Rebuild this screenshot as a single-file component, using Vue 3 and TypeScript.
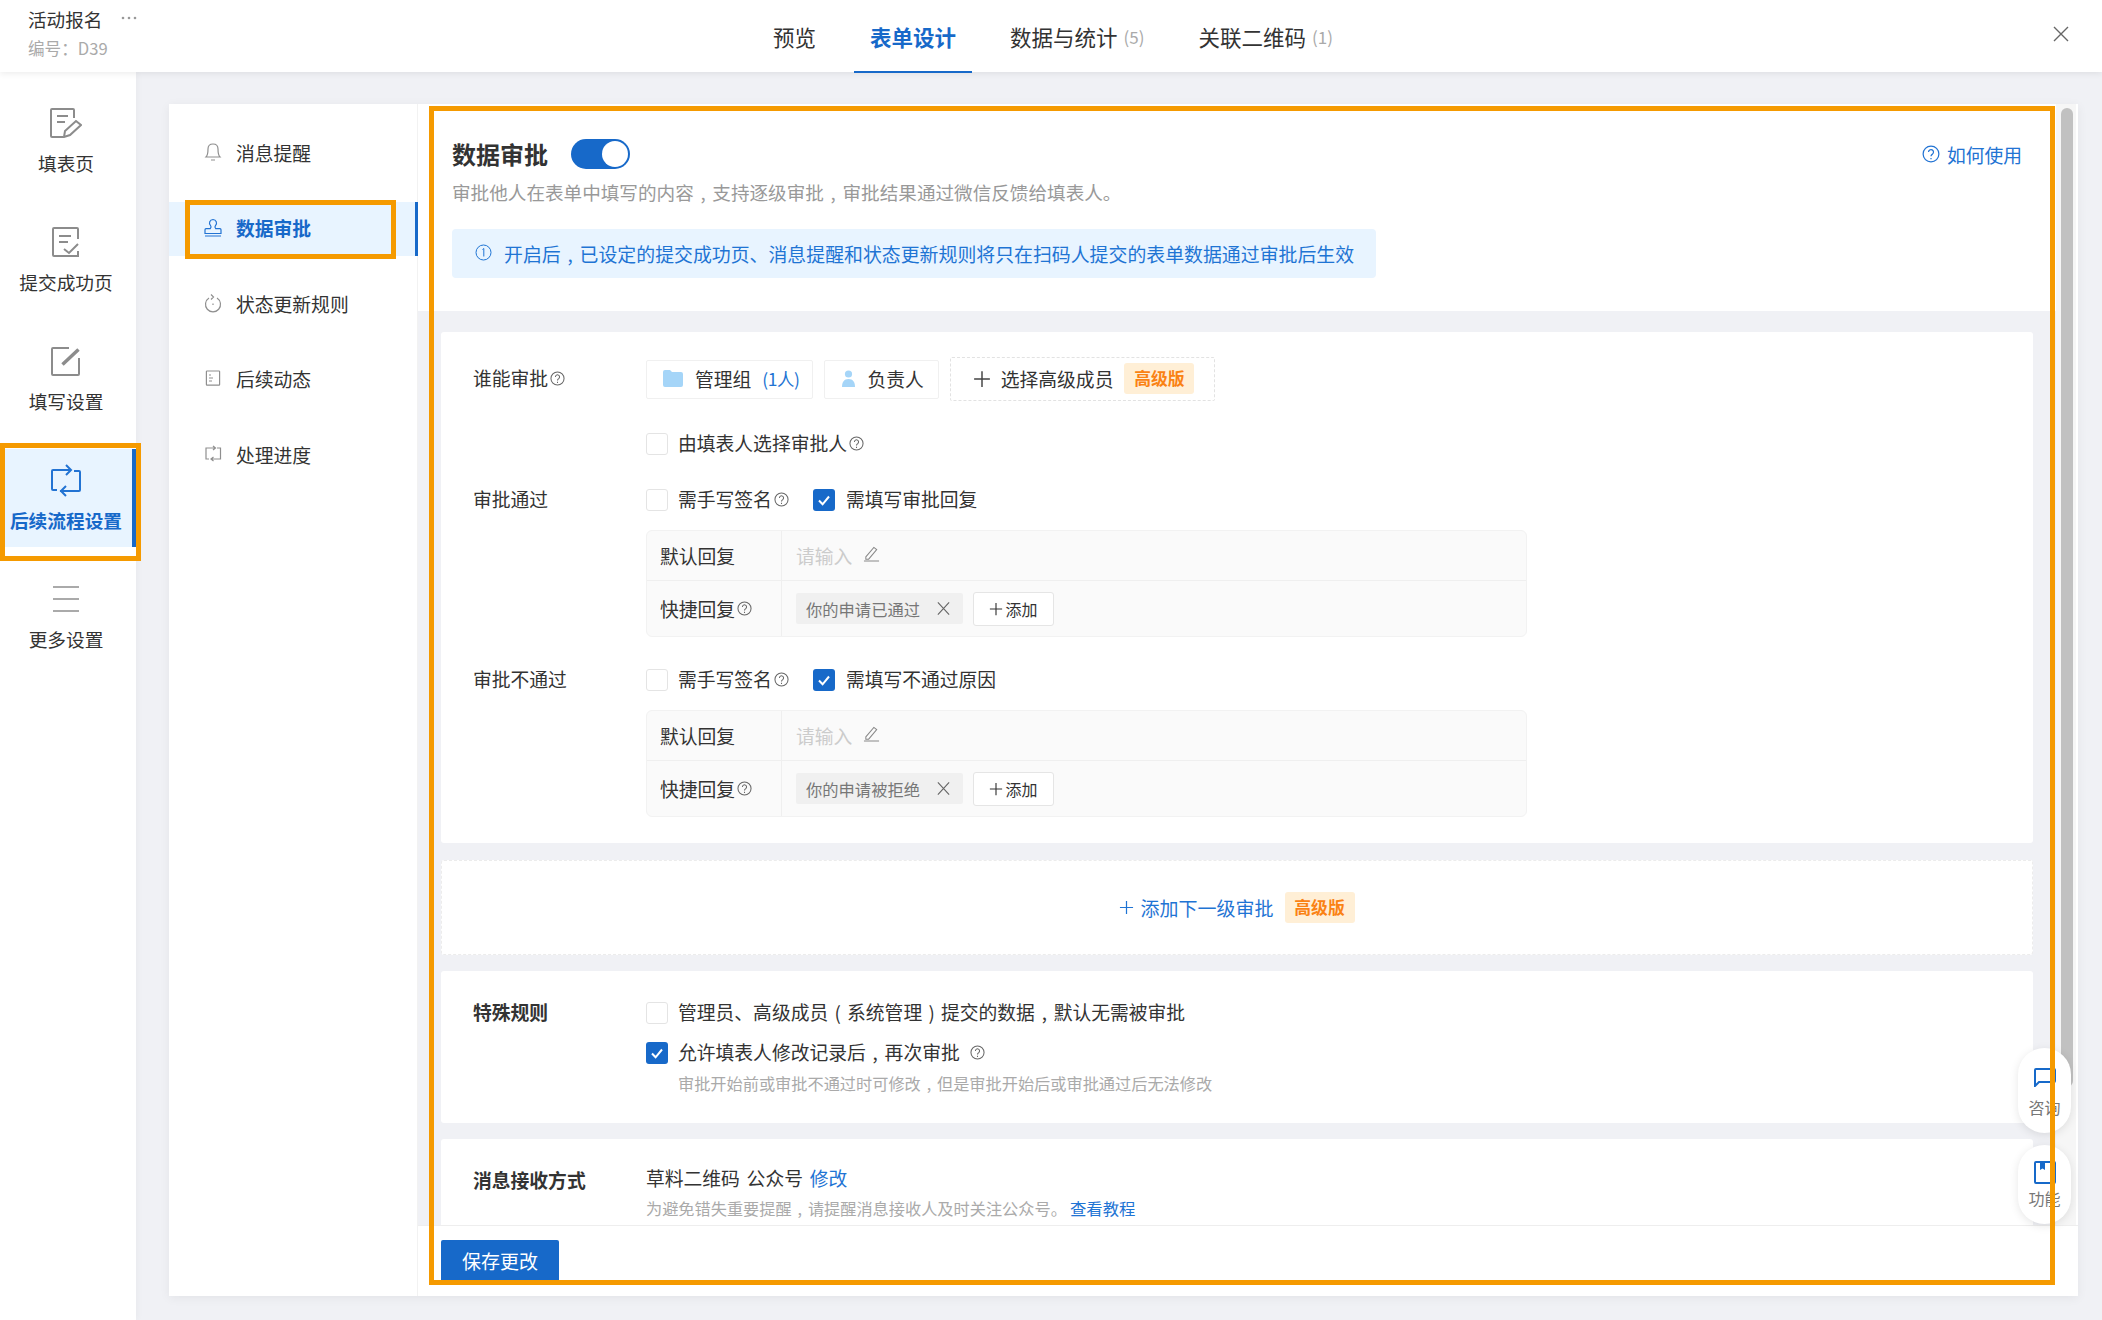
<script setup lang="ts">
const tabs = [
  { label: '预览', count: '', active: false },
  { label: '表单设计', count: '', active: true },
  { label: '数据与统计', count: '(5)', active: false },
  { label: '关联二维码', count: '(1)', active: false },
]
const rail = [
  { label: '填表页', active: false, w: 32, h: 30, d: 'M24 10V2a1 1 0 0 0-1-1H2a1 1 0 0 0-1 1v26a1 1 0 0 0 1 1h11M7 8h11M7 14h8M14 29l1-6 11-10 5 4-11 10z' },
  { label: '提交成功页', active: false, w: 28, h: 30, d: 'M26 12V2a1 1 0 0 0-1-1H2a1 1 0 0 0-1 1v26a1 1 0 0 0 1 1h24v-5M7 9h12M7 15h9M12 22l5 4 9-9' },
  { label: '填写设置', active: false, w: 30, h: 30, d: 'M18 2H2a1 1 0 0 0-1 1v25a1 1 0 0 0 1 1h25a1 1 0 0 0 1-1V12M11 18L27 3M12 19L28 4' },
  { label: '后续流程设置', active: true, w: 30, h: 33, d: 'M6 26H2a1 1 0 0 1-1-1V7a1 1 0 0 1 1-1h18M15 1l5 5-5 5M23 7h5a1 1 0 0 1 1 1v18a1 1 0 0 1-1 1H9M15 22l-5 5 5 5' },
  { label: '更多设置', active: false, w: 28, h: 26, d: 'M1 1h26M1 13h26M1 25h26' },
]
const subnav = [
  { label: '消息提醒', active: false, d: 'M2 15c2-2 2-4 2-8 0-3 2-5 5-5s5 2 5 5c0 4 0 6 2 8zM7 18h4' },
  { label: '数据审批', active: true, d: 'M9 1.5a3.6 3.6 0 0 1 2.4 6.2c-.6.6-.4 2 .3 3h4.3c.6 0 1 .4 1 1v3.8H1v-3.8c0-.6.4-1 1-1h4.300c.7-1 .9-2.400.3-3A3.600 3.600 0 0 1 9 1.500zM1 18h16' },
  { label: '状态更新规则', active: false, d: 'M5 5a7.500 7.500 0 1 0 8 0M7 1.500L9.500 4 7 6.500M9 10.500v1.400' },
  { label: '后续动态', active: false, d: 'M3 2h12a.6.6 0 0 1 .6.6v13a.6.6 0 0 1-.6.6H3a.6.6 0 0 1-.6-.6v-13A.6.6 0 0 1 3 2zM5 6h2M5 9h4M5 12h3' },
  { label: '处理进度', active: false, d: 'M5 15H2V4h9M9 2l2.500 2L9 6M13 4h3.500v11H7M9.500 13L7 15l2.500 2' },
]
const approvals = [
  { label: '审批通过', need: '需填写审批回复', tag: '你的申请已通过' },
  { label: '审批不通过', need: '需填写不通过原因', tag: '你的申请被拒绝' },
]
</script>

<template>
  <div class="page">
    <svg class="sprite" aria-hidden="true">
      <symbol id="help" viewBox="0 0 16 16">
        <circle cx="8" cy="8" r="7" fill="none" stroke="currentColor" stroke-width="1.100" />
        <path d="M5.800 6.300a2.200 2.200 0 1 1 3.500 1.800c-.9.6-1.300 1-1.300 2M8 11.500v1.200" fill="none" stroke="currentColor" stroke-width="1.100" />
      </symbol>
      <symbol id="tick" viewBox="0 0 22 22">
        <path d="M6 11.500l3.600 3.800L16 7.500" fill="none" stroke="#fff" stroke-width="2" />
      </symbol>
      <symbol id="pen" viewBox="0 0 18 18">
        <path d="M3 12.500L11.500 2.500l3 2.400L6 15H3zM1 17h16" fill="none" stroke="currentColor" stroke-width="1.100" />
      </symbol>
      <symbol id="cross" viewBox="0 0 16 16">
        <path d="M2 1.500l12 13M14 1.500l-12 13" fill="none" stroke="currentColor" stroke-width="1.200" />
      </symbol>
      <symbol id="plus" viewBox="0 0 16 16">
        <path d="M8 1v14M1 8h14" fill="none" stroke="currentColor" stroke-width="1.300" />
      </symbol>
    </svg>

    <header class="topbar">
      <div class="doc">
        <div class="doc-title">
          <span>活动报名</span>
          <svg class="dots" width="16" height="4" viewBox="0 0 16 4"><circle cx="2" cy="2" r="1.300" /><circle cx="8" cy="2" r="1.300" /><circle cx="14" cy="2" r="1.300" /></svg>
        </div>
        <div class="doc-no">编号：D39</div>
      </div>
      <nav class="tabs">
        <a v-for="t in tabs" :key="t.label" class="tab" :class="{ on: t.active }">
          {{ t.label }}<span v-if="t.count" class="count">{{ t.count }}</span>
        </a>
      </nav>
      <svg class="close" width="16" height="16" viewBox="0 0 16 16"><path d="M1 1l14 14M15 1L1 15" fill="none" stroke="#666" stroke-width="1.400" /></svg>
    </header>

    <div class="body">
      <aside class="rail">
        <div v-for="r in rail" :key="r.label" class="rail-item" :class="{ on: r.active }">
          <span class="rail-icon">
            <svg :width="r.w" :height="r.h" :viewBox="`0 0 ${r.w} ${r.h}`"><path :d="r.d" fill="none" stroke="currentColor" stroke-width="2" /></svg>
          </span>
          <span class="rail-label">{{ r.label }}</span>
          <i v-if="r.active" class="mark mark-rail"></i>
        </div>
      </aside>

      <div class="card">
        <nav class="subnav">
          <div v-for="s in subnav" :key="s.label" class="sub-item" :class="{ on: s.active }">
            <svg class="sub-icon" width="18" height="20" viewBox="0 0 18 20"><path :d="s.d" fill="none" stroke="currentColor" stroke-width="1.200" /></svg>
            <span>{{ s.label }}</span>
            <i v-if="s.active" class="mark mark-sub"></i>
          </div>
        </nav>

        <section class="main">
          <div class="scroll-row">
            <div class="content">
              <div class="head">
                <div class="head-row">
                  <h1 class="head-title">数据审批</h1>
                  <span class="toggle"><i></i></span>
                  <a class="how"><svg class="how-icon"><use href="#help" /></svg>如何使用</a>
                </div>
                <p class="desc">审批他人在表单中填写的内容<span class="fw">,</span>支持逐级审批<span class="fw">,</span>审批结果通过微信反馈给填表人。</p>
                <div class="banner">
                  <svg class="banner-icon" width="17" height="17" viewBox="0 0 17 17"><circle cx="8.500" cy="8.500" r="7.500" fill="none" stroke="currentColor" /><path d="M7.500 5.500l1.300-1v8" fill="none" stroke="currentColor" /></svg>
                  <span>开启后<span class="fw">,</span>已设定的提交成功页、消息提醒和状态更新规则将只在扫码人提交的表单数据通过审批后生效</span>
                </div>
              </div>

              <div class="section s-rules">
                <div class="row who">
                  <span class="row-label">谁能审批<svg class="q"><use href="#help" /></svg></span>
                  <div class="chips">
                    <span class="chip">
                      <svg class="chip-folder" width="20" height="17" viewBox="0 0 20 17"><path d="M0 2a2 2 0 0 1 2-2h5l2 2h9a2 2 0 0 1 2 2v11a2 2 0 0 1-2 2H2a2 2 0 0 1-2-2z" fill="#a5d5f8" /></svg>
                      管理组<em>(1人)</em>
                    </span>
                    <span class="chip person">
                      <svg class="chip-person" width="13" height="17" viewBox="0 0 13 17"><circle cx="6.500" cy="4" r="3.600" fill="#a5d5f8" /><path d="M0 17c0-5 2-8 6.500-8s6.500 3 6.500 8z" fill="#a5d5f8" /></svg>
                      负责人
                    </span>
                    <span class="chip dashed">
                      <svg class="chip-plus"><use href="#plus" /></svg>
                      选择高级成员
                      <b class="pro">高级版</b>
                    </span>
                  </div>
                </div>
                <div class="row self">
                  <span class="row-label"></span>
                  <label class="check"><i class="cb"></i>由填表人选择审批人<svg class="q"><use href="#help" /></svg></label>
                </div>
                <template v-for="a in approvals" :key="a.label">
                  <div class="row verdict">
                    <span class="row-label">{{ a.label }}</span>
                    <label class="check"><i class="cb"></i>需手写签名<svg class="q"><use href="#help" /></svg></label>
                    <label class="check second"><i class="cb on"><svg><use href="#tick" /></svg></i>{{ a.need }}</label>
                  </div>
                  <div class="reply">
                    <div class="reply-row first">
                      <span class="reply-label">默认回复</span>
                      <span class="reply-value holder">请输入<svg class="pen"><use href="#pen" /></svg></span>
                    </div>
                    <div class="reply-row">
                      <span class="reply-label">快捷回复<svg class="q"><use href="#help" /></svg></span>
                      <span class="reply-value">
                        <span class="tag">{{ a.tag }}<svg class="tag-x"><use href="#cross" /></svg></span>
                        <button class="add"><svg class="add-plus"><use href="#plus" /></svg>添加</button>
                      </span>
                    </div>
                  </div>
                </template>
              </div>

              <div class="section s-next">
                <a class="next"><svg class="next-plus"><use href="#plus" /></svg>添加下一级审批</a>
                <b class="pro">高级版</b>
              </div>

              <div class="section s-special">
                <div class="row">
                  <strong class="row-label">特殊规则</strong>
                  <label class="check"><i class="cb"></i><span>管理员、高级成员<span class="fw">(</span>系统管理<span class="fw">)</span>提交的数据<span class="fw">,</span>默认无需被审批</span></label>
                </div>
                <div class="row again">
                  <span class="row-label"></span>
                  <label class="check"><i class="cb on"><svg><use href="#tick" /></svg></i><span>允许填表人修改记录后<span class="fw">,</span>再次审批</span><svg class="q q-gap"><use href="#help" /></svg></label>
                </div>
                <p class="help">审批开始前或审批不通过时可修改<span class="fw">,</span>但是审批开始后或审批通过后无法修改</p>
              </div>

              <div class="section s-msg">
                <div class="row">
                  <strong class="row-label">消息接收方式</strong>
                  <span class="msg-value">草料二维码 公众号 <a class="link">修改</a></span>
                </div>
                <p class="hint">为避免错失重要提醒<span class="fw">,</span>请提醒消息接收人及时关注公众号。<a class="link tutorial">查看教程</a></p>
              </div>
            </div>
            <div class="track"><div class="thumb"></div></div>
          </div>

          <footer class="foot">
            <button class="save">保存更改</button>
          </footer>

          <div class="floats">
            <div class="float ask">
              <svg width="22" height="19" viewBox="0 0 22 19"><path d="M1 18V2a1 1 0 0 1 1-1h18a1 1 0 0 1 1 1v11a1 1 0 0 1-1 1H5zM9 14h9" fill="none" stroke="#1769c9" stroke-width="2" /></svg>
              <span>咨询</span>
            </div>
            <div class="float fn">
              <svg width="22" height="23" viewBox="0 0 22 23"><path d="M2 1h18a1 1 0 0 1 1 1v19a1 1 0 0 1-1 1H2a1 1 0 0 1-1-1V2a1 1 0 0 1 1-1z" fill="none" stroke="#1769c9" stroke-width="2" /><path d="M6 1h5v8L8.500 7.500 6 9z" fill="#1769c9" /></svg>
              <span>功能</span>
            </div>
          </div>
        </section>

        <i class="mark mark-main"></i>
      </div>
    </div>
  </div>
</template>

<style>
html, body { margin: 0; padding: 0; }
</style>

<style scoped>
* { box-sizing: border-box; }
.page {
  width: 2102px; height: 1320px; overflow: hidden; position: relative;
  display: flex; flex-direction: column; background: #f0f1f5;
  font-family: "Noto Sans CJK SC", "Noto Sans", sans-serif; font-size: 18.8px; color: #333;
}
.sprite { position: absolute; width: 0; height: 0; }
p, h1 { margin: 0; }
a { text-decoration: none; }
i, em { font-style: normal; }
.fw { display: inline-block; width: 1em; text-align: center; }

.topbar {
  flex: none; height: 72px; display: flex; padding-left: 28px; background: #fff; position: relative; z-index: 3;
  box-shadow: 0 2px 6px rgba(0, 0, 0, .07);
}
.doc { width: 729px; padding-top: 6px; }
.doc-title { display: flex; align-items: center; line-height: 26px; font-size: 18.600px; }
.dots { margin-left: 19px; margin-top: -3px; fill: #999; }
.doc-no { margin-top: 4px; line-height: 24px; font-size: 16.600px; color: #aaa; }
.tabs { display: flex; gap: 22px; }
.tab { position: relative; display: flex; align-items: center; height: 72px; padding: 0 16px; font-size: 21.500px; color: #333; }
.tab.on { color: #1769c9; font-weight: 700; }
.tab.on::after { content: ""; position: absolute; left: 0; right: 0; bottom: -1px; height: 2px; background: #1769c9; }
.count { margin-left: 6px; font-size: 17px; color: #aaa; }
.close { margin-left: auto; margin-right: 33px; margin-top: 26px; }

.body { flex: 1; display: flex; min-height: 0; }
.rail { flex: none; width: 136px; padding-top: 20px; background: #fff; position: relative; z-index: 2; box-shadow: 2px 0 6px rgba(0, 0, 0, .03); }
.rail-item { position: relative; height: 98px; margin-bottom: 21px; padding: 14px 4px 0 0; display: flex; flex-direction: column; align-items: center; color: #8c8c8c; }
.rail-icon { height: 34px; display: flex; align-items: center; justify-content: center; }
.rail-label { margin-top: 10px; line-height: 26px; color: #333; font-size: 18.700px; white-space: nowrap; }
.rail-item:nth-child(5) .rail-icon { color: #aaa; }
.rail-item.on { background: #e8f4ff; border-right: 4px solid #1769c9; color: #2273d3; padding-right: 0; }
.rail-item.on .rail-label { color: #1769c9; font-weight: 700; }

.mark { position: absolute; border: 5.500px solid #f59a00; pointer-events: none; z-index: 5; }
.mark-rail { left: 0; top: -6px; width: 141px; height: 118px; }
.mark-sub { left: 16px; top: -2px; width: 211px; height: 59px; }
.mark-main { left: 260px; top: 2px; width: 1626px; height: 1179px; }

.card {
  flex: none; position: relative; width: 1909px; height: 1192px; margin: 32px 0 0 33px;
  display: flex; background: #fff; box-shadow: 0 2px 10px rgba(0, 0, 0, .06);
}
.subnav { flex: none; width: 249px; padding-top: 22px; border-right: 1px solid #f2f2f2; display: flex; flex-direction: column; gap: 21.500px; }
.sub-item { position: relative; height: 54px; margin-right: -1px; padding: 0 0 2px 35px; display: flex; align-items: center; gap: 14px; color: #333; }
.sub-icon { flex: none; color: #8f8f8f; }
.sub-item.on { background: #e8f4ff; border-right: 3px solid #1769c9; color: #1769c9; font-weight: 700; }
.sub-item.on .sub-icon { color: #2273d3; }

.main { flex: 1; min-width: 0; position: relative; display: flex; flex-direction: column; }
.scroll-row { flex: 1; min-height: 0; display: flex; overflow: hidden; }
.content { flex: none; width: 1638px; background: #f0f1f5; overflow: hidden; }
.track { flex: none; width: 20px; padding: 4px 3px 0 5px; background: #f6f6f6; }
.thumb { width: 12px; height: 979px; border-radius: 6px; background: #c1c1c1; }

.head { height: 207px; padding: 35px 34px 0; background: #fff; }
.head-row { display: flex; align-items: center; height: 30px; }
.head-title { font-size: 24px; font-weight: 700; line-height: 30px; color: #333; }
.toggle { position: relative; width: 59px; height: 30px; margin-left: 23px; border-radius: 15px; background: #1769c9; }
.toggle i { position: absolute; right: 2px; top: 2px; width: 26px; height: 26px; border-radius: 50%; background: #fff; }
.how { margin-left: auto; display: flex; align-items: center; color: #2273d3; font-size: 18.800px; }
.how-icon { width: 18px; height: 18px; margin-right: 7px; }
.desc { margin-top: 11px; line-height: 24px; font-size: 18.600px; color: #999; }
.banner {
  width: 924px; height: 49px; margin-top: 25px; padding-left: 23px; display: flex; align-items: center; white-space: nowrap;
  border-radius: 4px; background: #e8f4ff; color: #1f74d4; font-size: 18.900px;
}
.banner-icon { margin-right: 12px; margin-top: -3px; flex: none; }

.section { margin: 16px 23px 0; background: #fff; border-radius: 3px; }
.row { display: flex; align-items: center; line-height: 22px; }
.row-label { flex: none; width: 173px; margin-left: 32px; padding-bottom: 2px; display: flex; align-items: center; white-space: nowrap; }
strong.row-label { font-weight: 700; }
.q { flex: none; width: 15px; height: 15px; margin-left: 2px; color: #666; }
.q-gap { margin-left: 10px; }

.s-rules { margin-top: 21px; height: 511px; padding-top: 25px; }
.who { height: 44px; }
.chips { display: flex; align-items: center; gap: 11px; }
.chip { display: flex; align-items: center; height: 39px; padding: 0 13px 1px 16px; border: 1px solid #f0f0f0; border-radius: 2px; white-space: nowrap; }
.chip.person { padding: 0 14px 1px 17px; }
.chip em { margin-left: 11px; color: #2273d3; font-size: 17.500px; letter-spacing: -.5px; }
.chip-folder { margin-right: 12px; }
.chip-person { margin-right: 12px; }
.chip.dashed { height: 44px; padding: 0 20px 1px 22px; border: 1px dashed #e2e2e2; }
.chip-plus { width: 18px; height: 18px; margin-right: 10px; color: #444; }
.pro {
  display: inline-flex; align-items: center; justify-content: center; width: 70px; height: 31px; margin-left: 11px; padding-bottom: 1px;
  border-radius: 3px; background: #ffefd6; color: #fa8214; font-size: 16.800px; font-weight: 700;
}
.self { margin-top: 32px; height: 22px; }
.check { display: flex; align-items: center; height: 22px; padding-bottom: 2px; white-space: nowrap; }
.cb { flex: none; position: relative; top: 1px; width: 22px; height: 22px; margin-right: 10px; border: 1px solid #e4e4e4; border-radius: 3px; background: #fff; }
.cb svg { position: absolute; left: 0; top: 0; width: 22px; height: 22px; }
.cb.on { border: 0; background: #1769c9; }
.verdict { margin-top: 34px; height: 22px; }
.second { margin-left: 24px; }
.second .cb { margin-right: 11px; }
.reply { width: 881px; margin: 19px 0 0 205px; border: 1px solid #f2f2f2; border-radius: 6px; background: #fafafa; }
.reply + .verdict { margin-top: 32px; }
.reply-row { display: flex; height: 55px; }
.reply-row.first { height: 50px; border-bottom: 1px solid #efefef; }
.reply-label { flex: none; width: 135px; padding-left: 13px; display: flex; align-items: center; border-right: 1px solid #efefef; white-space: nowrap; }
.reply-value { display: flex; align-items: center; padding-left: 14px; }
.holder { color: #ccc; }
.pen { width: 17px; height: 17px; margin-left: 11px; margin-top: -4px; color: #888; }
.tag { display: flex; align-items: center; height: 31px; padding: 0 12px 0 10px; border-radius: 2px; background: #f0f0f0; color: #777; font-size: 16.300px; }
.tag-x { width: 15px; height: 15px; margin-left: 16px; color: #666; }
.add {
  display: flex; align-items: center; justify-content: center; width: 81px; height: 34px; margin-left: 10px; padding: 0;
  border: 1px solid #e5e5e5; border-radius: 3px; background: #fff; color: #333; font: inherit; font-size: 16px;
}
.add-plus { width: 14px; height: 14px; margin-right: 2px; }

.s-next { margin-top: 17px; height: 95px; display: flex; align-items: center; justify-content: center; border: 1px dashed #ececec; background: #fff; }
.next { display: flex; align-items: center; color: #1f74d4; font-size: 19px; padding-bottom: 1px; }
.next-plus { width: 15px; height: 15px; margin-right: 6px; }

.s-special { height: 152px; padding-top: 30px; }
.again { margin-top: 17px; }
.help { margin: 8px 0 0 237px; line-height: 22px; font-size: 16.200px; color: #aaa; }

.s-msg { height: 120px; padding-top: 28px; }
.s-msg .row { height: 24px; }
.s-msg .row-label { padding: 2px 0 0; }
.msg-value { word-spacing: 2.500px; padding-bottom: 3px; }
.link { color: #1f74d4; }
.hint { margin: 5px 0 0 205px; line-height: 24px; font-size: 16.200px; color: #aaa; }
.tutorial { margin-left: 3px; font-size: 16.400px; }

.foot { flex: none; height: 71px; padding: 14px 23px 0; border-top: 1px solid #eee; background: #fff; }
.save { width: 118px; height: 44px; padding: 0 0 4px; border: 0; border-radius: 2px; background: #1769c9; color: #fff; font: inherit; font-size: 19px; }

.floats { position: absolute; right: 7px; top: 944px; display: flex; flex-direction: column; gap: 12px; z-index: 4; }
.float {
  width: 53px; display: flex; flex-direction: column; align-items: center; border-radius: 27px; background: #fff;
  box-shadow: 0 2px 10px rgba(0, 0, 0, .1); color: #777; font-size: 16px; line-height: 24px;
}
.ask { height: 85px; padding-top: 20px; }
.ask span { margin-top: 8px; }
.fn { height: 79px; padding-top: 16px; }
.fn span { margin-top: 2px; }
</style>
